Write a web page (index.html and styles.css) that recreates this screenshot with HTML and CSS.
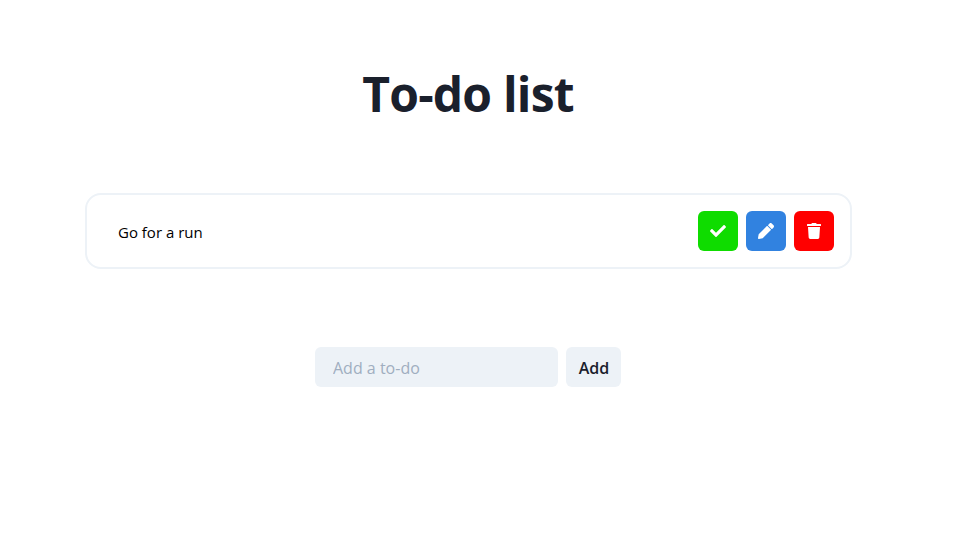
FILE: index.html
```html
<!DOCTYPE html>
<html lang="en">
<head>
<meta charset="utf-8">
<title>To-do list</title>
<link rel="stylesheet" href="styles.css">
</head>
<body>
<main class="app">
  <h1 class="title">To-do list</h1>
  <ul class="list">
    <li class="item">
      <span class="item-text">Go for a run</span>
      <div class="actions">
        <button class="icon-btn done" aria-label="Done">
          <svg viewBox="0 0 512 512" width="16" height="16"><path fill="currentColor" d="M173.898 439.404l-166.4-166.4c-9.997-9.997-9.997-26.206 0-36.204l36.203-36.204c9.997-9.998 26.207-9.998 36.204 0L192 312.69 432.095 72.596c9.997-9.997 26.207-9.997 36.204 0l36.203 36.204c9.997 9.997 9.997 26.206 0 36.204l-294.4 294.401c-9.998 9.997-26.207 9.997-36.204-.001z"/></svg>
        </button>
        <button class="icon-btn edit" aria-label="Edit">
          <svg viewBox="0 0 512 512" width="16" height="16"><path fill="currentColor" d="M497.9 142.1l-46.1 46.1c-4.7 4.7-12.3 4.7-17 0l-111-111c-4.7-4.7-4.7-12.3 0-17l46.1-46.1c18.7-18.7 49.1-18.7 67.9 0l60.1 60.1c18.8 18.7 18.8 49.1 0 67.9zM284.2 99.8L21.6 362.4.4 483.9c-2.9 16.4 11.4 30.6 27.8 27.8l121.5-21.3 262.6-262.6c4.7-4.7 4.7-12.3 0-17l-111-111c-4.8-4.7-12.4-4.7-17.1 0z"/></svg>
        </button>
        <button class="icon-btn remove" aria-label="Delete">
          <svg viewBox="0 0 448 512" width="14" height="16"><path fill="currentColor" d="M432 32H312l-9.4-18.7A24 24 0 0 0 281.1 0H166.8a23.72 23.72 0 0 0-21.4 13.3L136 32H16A16 16 0 0 0 0 48v32a16 16 0 0 0 16 16h416a16 16 0 0 0 16-16V48a16 16 0 0 0-16-16zM53.2 467a48 48 0 0 0 47.9 45h245.8a48 48 0 0 0 47.9-45L416 128H32z"/></svg>
        </button>
      </div>
    </li>
  </ul>
  <form class="add-form">
    <input class="add-input" type="text" placeholder="Add a to-do">
    <button class="add-btn" type="button">Add</button>
  </form>
</main>
</body>
</html>
```
FILE: styles.css
```css
* {
  box-sizing: border-box;
}

html, body {
  margin: 0;
  padding: 0;
  background: #fff;
}

body {
  font-family: "Open Sans", "Noto Sans", sans-serif;
  color: #1a202c;
}

.app {
  width: 936px;
  display: flex;
  flex-direction: column;
  align-items: center;
  padding-top: 64px;
}

.title {
  margin: 0;
  font-size: 48px;
  line-height: 60px;
  font-weight: 700;
  letter-spacing: -0.8px;
}

.list {
  list-style: none;
  margin: 69px 0 0 1px;
  padding: 0;
  width: 767px;
}

.item {
  display: flex;
  align-items: center;
  justify-content: space-between;
  height: 76px;
  padding: 0 16px 0 31px;
  border: 2px solid #edf2f7;
  border-radius: 16px;
}

.item-text {
  padding-top: 2px;
  font-size: 15px;
  color: #000;
}

.actions {
  display: flex;
  gap: 8px;
}

.icon-btn {
  display: flex;
  align-items: center;
  justify-content: center;
  width: 40px;
  height: 40px;
  padding: 0;
  border: 0;
  border-radius: 6px;
  color: #fff;
}

.done { background: #0fdc00; }
.edit { background: #3182e0; }
.remove { background: #ff0000; }

.add-form {
  display: flex;
  gap: 8px;
  margin-top: 78px;
}

.add-input {
  width: 243px;
  height: 40px;
  padding: 2px 18px 0;
  border: 0;
  border-radius: 6px;
  background: #edf2f7;
  font: 16px "Open Sans", "Noto Sans", sans-serif;
  color: #1a202c;
  outline: none;
}

.add-input::placeholder {
  color: #a0aec0;
  opacity: 1;
}

.add-btn {
  width: 55px;
  height: 40px;
  padding: 1px 0 0 1px;
  border: 0;
  border-radius: 6px;
  background: #edf2f7;
  font: 600 16px "Open Sans", "Noto Sans", sans-serif;
  color: #1a202c;
}
```
